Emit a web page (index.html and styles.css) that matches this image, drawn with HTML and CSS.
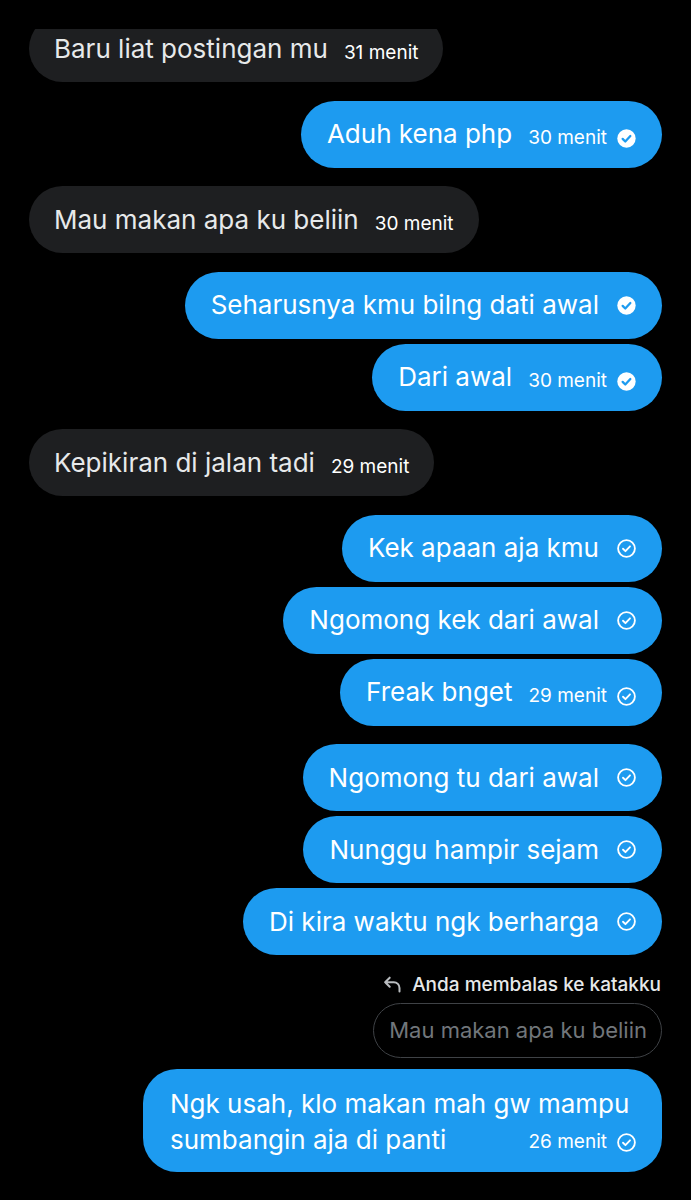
FILE: index.html
```html
<!DOCTYPE html>
<html lang="id">
<head>
<meta charset="utf-8">
<title>Pesan</title>
<link rel="stylesheet" href="styles.css">
</head>
<body>
<div class="topbar"></div>
<main class="thread">
  <div class="group in">
    <div class="bubble in"><span class="text">Baru liat postingan mu</span><span class="meta"><span class="time">31 menit</span></span></div>
  </div>
  <div class="group out">
    <div class="bubble out"><span class="text">Aduh kena php</span><span class="meta"><span class="time">30 menit</span><svg class="check" viewBox="0 0 24 24"><circle cx="12" cy="12" r="10.5" fill="#fff"/><path d="M7.6 12.4l3 3 5.8-6.3" fill="none" stroke="#1d9bf0" stroke-width="2.6" stroke-linecap="round" stroke-linejoin="round"/></svg></span></div>
  </div>
  <div class="group in">
    <div class="bubble in"><span class="text">Mau makan apa ku beliin</span><span class="meta"><span class="time">30 menit</span></span></div>
  </div>
  <div class="group out">
    <div class="bubble out"><span class="text">Seharusnya kmu bilng dati awal</span><span class="meta solo"><svg class="check" viewBox="0 0 24 24"><circle cx="12" cy="12" r="10.5" fill="#fff"/><path d="M7.6 12.4l3 3 5.8-6.3" fill="none" stroke="#1d9bf0" stroke-width="2.6" stroke-linecap="round" stroke-linejoin="round"/></svg></span></div>
    <div class="bubble out"><span class="text">Dari awal</span><span class="meta"><span class="time">30 menit</span><svg class="check" viewBox="0 0 24 24"><circle cx="12" cy="12" r="10.5" fill="#fff"/><path d="M7.6 12.4l3 3 5.8-6.3" fill="none" stroke="#1d9bf0" stroke-width="2.6" stroke-linecap="round" stroke-linejoin="round"/></svg></span></div>
  </div>
  <div class="group in">
    <div class="bubble in"><span class="text">Kepikiran di jalan tadi</span><span class="meta"><span class="time">29 menit</span></span></div>
  </div>
  <div class="group out">
    <div class="bubble out"><span class="text">Kek apaan aja kmu</span><span class="meta solo"><svg class="check" viewBox="0 0 24 24"><circle cx="12" cy="12" r="9.6" fill="none" stroke="#fff" stroke-width="2.1"/><path d="M8 12.3l2.8 2.8 5.2-5.6" fill="none" stroke="#fff" stroke-width="2.1" stroke-linecap="round" stroke-linejoin="round"/></svg></span></div>
    <div class="bubble out"><span class="text">Ngomong kek dari awal</span><span class="meta solo"><svg class="check" viewBox="0 0 24 24"><circle cx="12" cy="12" r="9.6" fill="none" stroke="#fff" stroke-width="2.1"/><path d="M8 12.3l2.8 2.8 5.2-5.6" fill="none" stroke="#fff" stroke-width="2.1" stroke-linecap="round" stroke-linejoin="round"/></svg></span></div>
    <div class="bubble out"><span class="text">Freak bnget</span><span class="meta"><span class="time">29 menit</span><svg class="check" viewBox="0 0 24 24"><circle cx="12" cy="12" r="9.6" fill="none" stroke="#fff" stroke-width="2.1"/><path d="M8 12.3l2.8 2.8 5.2-5.6" fill="none" stroke="#fff" stroke-width="2.1" stroke-linecap="round" stroke-linejoin="round"/></svg></span></div>
  </div>
  <div class="group out">
    <div class="bubble out"><span class="text">Ngomong tu dari awal</span><span class="meta solo"><svg class="check" viewBox="0 0 24 24"><circle cx="12" cy="12" r="9.6" fill="none" stroke="#fff" stroke-width="2.1"/><path d="M8 12.3l2.8 2.8 5.2-5.6" fill="none" stroke="#fff" stroke-width="2.1" stroke-linecap="round" stroke-linejoin="round"/></svg></span></div>
    <div class="bubble out"><span class="text">Nunggu hampir sejam</span><span class="meta solo"><svg class="check" viewBox="0 0 24 24"><circle cx="12" cy="12" r="9.6" fill="none" stroke="#fff" stroke-width="2.1"/><path d="M8 12.3l2.8 2.8 5.2-5.6" fill="none" stroke="#fff" stroke-width="2.1" stroke-linecap="round" stroke-linejoin="round"/></svg></span></div>
    <div class="bubble out"><span class="text">Di kira waktu ngk berharga</span><span class="meta solo"><svg class="check" viewBox="0 0 24 24"><circle cx="12" cy="12" r="9.6" fill="none" stroke="#fff" stroke-width="2.1"/><path d="M8 12.3l2.8 2.8 5.2-5.6" fill="none" stroke="#fff" stroke-width="2.1" stroke-linecap="round" stroke-linejoin="round"/></svg></span></div>
  </div>
  <div class="group out reply-group">
    <div class="reply-label"><svg class="reply-icon" viewBox="0 0 24 24"><path d="M8.8 4.2L3.6 9.4l5.2 5.2M3.6 9.4H13.5a6.5 6.5 0 0 1 6.5 6.5V20" fill="none" stroke="#b9bcbf" stroke-width="2.3" stroke-linecap="round" stroke-linejoin="round"/></svg><span>Anda membalas ke katakku</span></div>
    <div class="quoted">Mau makan apa ku beliin</div>
    <div class="bubble out multi">
      <span class="line">Ngk usah, klo makan mah gw mampu</span>
      <div class="last-line"><span class="line">sumbangin aja di panti</span><span class="meta"><span class="time">26 menit</span><svg class="check" viewBox="0 0 24 24"><circle cx="12" cy="12" r="9.6" fill="none" stroke="#fff" stroke-width="2.1"/><path d="M8 12.3l2.8 2.8 5.2-5.6" fill="none" stroke="#fff" stroke-width="2.1" stroke-linecap="round" stroke-linejoin="round"/></svg></span></div>
    </div>
  </div>
</main>
</body>
</html>
```

FILE: styles.css
```css
* {
  box-sizing: border-box;
}

html, body {
  margin: 0;
  padding: 0;
  background: #000;
}

body {
  width: 691px;
  height: 1200px;
  overflow: hidden;
  position: relative;
  font-family: Inter, "Noto Sans", "DejaVu Sans", sans-serif;
  color: #fff;
}

.topbar {
  position: absolute;
  top: 0;
  left: 0;
  right: 0;
  height: 29px;
  background: #000;
  z-index: 2;
}

.thread {
  display: flex;
  flex-direction: column;
  gap: 18.5px;
  padding: 15px 29px 0;
}

.group {
  display: flex;
  flex-direction: column;
  gap: 5px;
}

.group.in {
  align-items: flex-start;
}

.group.out {
  align-items: flex-end;
}

.bubble {
  display: flex;
  align-items: center;
  gap: 16px;
  height: 67px;
  padding: 0 25px 0 25px;
  border-radius: 34px;
  max-width: 519px;
}

.bubble.in {
  background: #1e1f21;
  color: #e7e9ea;
}

.bubble.out {
  background: #1d9bf0;
  color: #fff;
  padding-left: 26px;
  padding-right: 25px;
}

.text {
  font-size: 26px;
  line-height: 32px;
  white-space: nowrap;
}

.meta {
  display: inline-flex;
  align-items: center;
  gap: 9px;
  margin-top: 8px;
}

.meta.solo {
  margin-left: 1px;
  margin-top: 0;
}

.time {
  font-size: 19px;
  line-height: 24px;
  color: #fff;
  white-space: nowrap;
}

.check {
  width: 21px;
  height: 21px;
  flex: none;
  display: block;
}

.bubble.multi {
  flex-direction: column;
  align-items: stretch;
  gap: 0;
  width: 519px;
  height: auto;
  padding: 17px 25px 14px 27px;
  border-radius: 34px;
}

.line {
  font-size: 26px;
  line-height: 36px;
  white-space: nowrap;
}

.last-line {
  display: flex;
  align-items: center;
  justify-content: space-between;
  gap: 16px;
}

.last-line .meta {
  margin-top: 5px;
}

.reply-group {
  gap: 0;
}

.reply-label {
  display: flex;
  align-items: center;
  gap: 9px;
  height: 22px;
  margin-right: 1px;
  font-size: 19px;
  font-weight: 500;
  color: #e7e9ea;
  line-height: 22px;
}

.reply-icon {
  width: 21px;
  height: 21px;
  display: block;
}

.quoted {
  display: flex;
  align-items: center;
  height: 55px;
  margin-top: 7px;
  padding: 0 14px 0 15px;
  border: 1.5px solid #3f4246;
  border-radius: 28px;
  font-size: 22px;
  color: #71767b;
  white-space: nowrap;
}

.reply-group .bubble.multi {
  margin-top: 11px;
}
```
